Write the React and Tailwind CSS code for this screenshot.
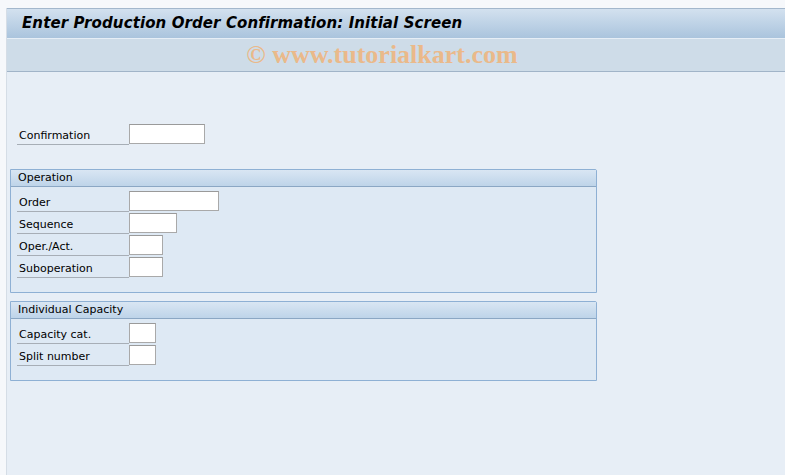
import React from "react";

const font = { fontFamily: '"DejaVu Sans", Tahoma, sans-serif' };

function Row({ label, w }) {
  return (
    <div className="flex items-end h-[22px]">
      <div className="w-[112px] h-[21px] border-b border-[#a7aeb6] pl-[2px] flex items-end pb-[3px] text-[11px] text-black leading-none">
        {label}
      </div>
      <div
        className="h-[20px] bg-white border border-[#a9a9a9] border-t-[#9a9a9a] mb-[1px] self-end"
        style={{ width: w }}
      />
    </div>
  );
}

function Group({ title, children, h }) {
  return (
    <div className="ml-[3px] w-[587px] border border-[#8eb0d4] bg-[#dee9f4] rounded-tr-[2px]" style={{ height: h }}>
      <div className="h-[17px] bg-gradient-to-b from-[#d9e6f3] to-[#bed4e9] border-b border-[#8ba7c4] pl-[7px] text-[11px] leading-[16px] text-black">
        {title}
      </div>
      <div className="pl-[6px] pt-[3px]">{children}</div>
    </div>
  );
}

export default function App() {
  return (
    <div className="w-[785px] h-[475px] bg-[#f6f8fb] overflow-hidden pl-[6px] pt-[8px]" style={font}>
      <div className="h-full bg-[#e7eef6] border-l border-[#d5dde6]">
        <div className="border-t border-[#a3b7cc] border-b border-b-[#a1b4c8]">
          <div className="h-[30px] bg-gradient-to-b from-[#d3e1ef] to-[#aac4dd] pl-[15px] flex items-center border-b border-[#e6eef6]">
            <span className="text-[15px] font-bold italic text-black tracking-[0.1px]" style={{ fontFamily: 'Tahoma, "DejaVu Sans", sans-serif' }}>
              Enter Production Order Confirmation: Initial Screen
            </span>
          </div>
          <div className="h-[32px] bg-[#cedce8] flex items-center justify-center">
            <span
              className="text-[26px] font-bold text-[#eab98a] ml-[-28px] leading-none"
              style={{ fontFamily: '"Liberation Serif", serif' }}
            >
              © www.tutorialkart.com
            </span>
          </div>
        </div>

        <div className="pt-[51px] pl-[10px]">
          <Row label="Confirmation" w={76} />
        </div>

        <div className="mt-[24px]">
          <Group title="Operation" h={124}>
            <Row label="Order" w={90} />
            <Row label="Sequence" w={48} />
            <Row label="Oper./Act." w={34} />
            <Row label="Suboperation" w={34} />
          </Group>
        </div>

        <div className="mt-[8px]">
          <Group title="Individual Capacity" h={80}>
            <Row label="Capacity cat." w={27} />
            <Row label="Split number" w={27} />
          </Group>
        </div>
      </div>
    </div>
  );
}
